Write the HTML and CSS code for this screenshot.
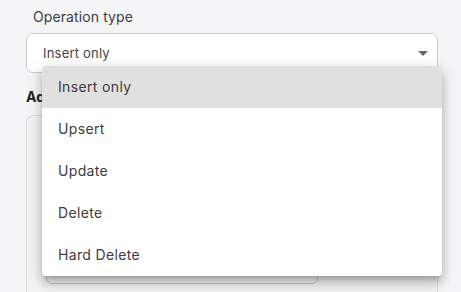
FILE: index.html
```html
<!DOCTYPE html>
<html lang="en">
  <head>
    <meta charset="UTF-8" />
    <meta name="viewport" content="width=device-width, initial-scale=1.0" />
    <title>Operation type</title>
    <link rel="stylesheet" href="styles.css">
  </head>
  <body>
    <div class="form">
      <div class="field-label">Operation type</div>
      <div class="select">
        <span>Insert only</span>
        <span class="caret"></span>
      </div>
      <div class="section-title">Advanced</div>
      <div class="card">
        <div class="inner-box"></div>
      </div>
    </div>

    <ul class="menu">
      <li class="selected">Insert only</li>
      <li>Upsert</li>
      <li>Update</li>
      <li>Delete</li>
      <li>Hard Delete</li>
    </ul>
  </body>
</html>
```

FILE: styles.css
```css
* {
  margin: 0;
  padding: 0;
  box-sizing: border-box;
}
body {
  background: #f4f5f7;
  font-family: Inter, "Noto Sans", sans-serif;
  color: #3d3d3d;
  overflow: hidden;
  height: 292px;
}
.form {
  width: 438px;
  padding: 8px 0 0 26px;
}
.field-label {
  font-size: 14px;
  line-height: 18px;
  color: #3d3d3d;
  padding-left: 7px;
  margin-bottom: 7px;
  letter-spacing: 0.1px;
}
.select {
  height: 40px;
  background: #fff;
  border: 1px solid #c9c9c9;
  border-radius: 7px;
  display: flex;
  align-items: center;
  justify-content: space-between;
  padding: 0 9px 0 16px;
  font-size: 13px;
  letter-spacing: 0.2px;
  color: #444;
}
.caret {
  width: 0;
  height: 0;
  border-left: 5px solid transparent;
  border-right: 5px solid transparent;
  border-top: 5px solid #666;
}
.section-title {
  font-size: 14px;
  font-weight: 700;
  line-height: 18px;
  color: #222;
  margin-top: 15px;
  margin-bottom: 9px;
}
.card {
  height: 200px;
  border: 1px solid #dcdcdc;
  border-bottom: none;
  border-radius: 8px 8px 0 0;
  background: #f3f3f3;
  padding: 20px 0 0 19px;
}
.inner-box {
  width: 272px;
  height: 148px;
  border: 1px solid #c4c4c4;
  border-radius: 6px;
  background: #f6f6f6;
}
.menu {
  list-style: none;
  position: absolute;
  left: 42px;
  top: 66px;
  width: 400px;
  background: #fff;
  border-radius: 4px;
  overflow: hidden;
  box-shadow: 0 5px 5px -3px rgba(0, 0, 0, 0.2), 0 8px 10px 1px rgba(0, 0, 0, 0.14), 0 3px 14px 2px rgba(0, 0, 0, 0.12);
}
.menu li {
  height: 42px;
  line-height: 42px;
  padding-left: 16px;
  font-size: 14px;
  letter-spacing: 0.35px;
  color: #3d3d3d;
}
.menu li.selected {
  background: #e0e0e0;
}
```
